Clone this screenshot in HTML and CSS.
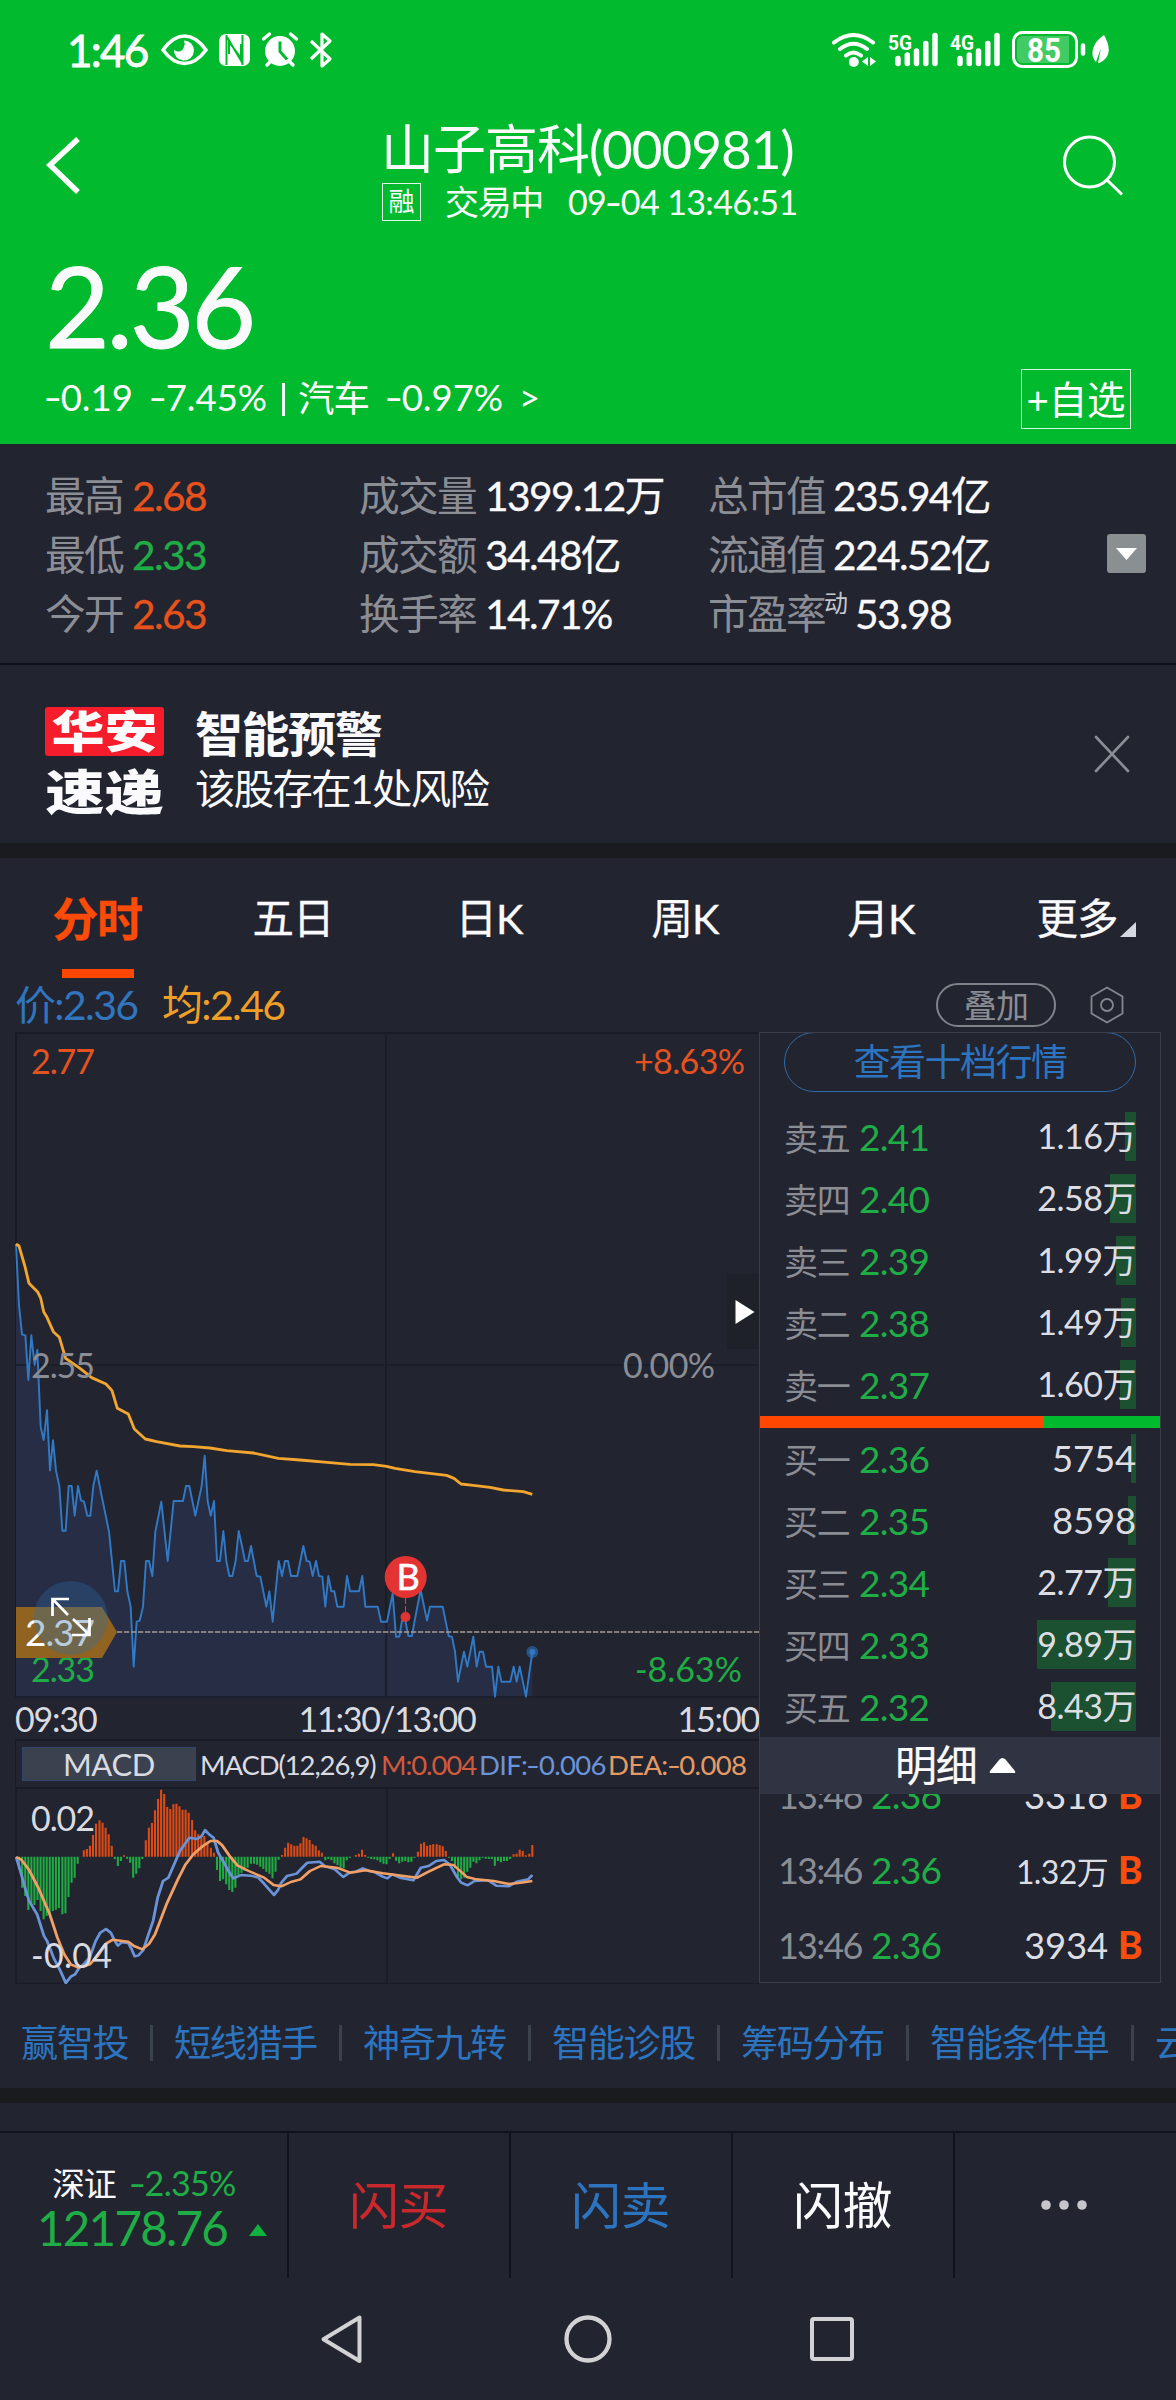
FILE: index.html
```html
<!DOCTYPE html>
<html lang="zh-CN">
<head>
<meta charset="utf-8">
<title>山子高科(000981)</title>
<link rel="stylesheet" href="styles.css">
</head>
<body>
<div class="app">
  <header class="head">
    <div class="status">
      <span class="clock">1:46</span>
      <svg class="ic-left" width="174" height="40" viewBox="160 30 174 40" fill="none" stroke="#fff">
        <path d="M163 50Q173 36 184.500 36T206 50Q196 63.500 184.500 63.500T163 50Z" stroke-width="3.600"/>
        <path d="M184 40.500a10 10 0 1 1-10 9c3.500 4 9.500 1.500 9.800-2.500a7 7 0 0 0 .2-6.500Z" fill="#fff" stroke="none"/>
        <path d="M226 34h17a7 7 0 0 1 7 7v18a7 7 0 0 1-7 7h-17a7 7 0 0 1-7-7V41a7 7 0 0 1 7-7Z" fill="#fff" stroke="none"/>
        <path d="M226.500 35v30M242.500 35v30M227 37l16 27M229 54V42l12 16V44" stroke="#02ba2e" stroke-width="2"/>
        <circle cx="280" cy="51" r="15" fill="#fff" stroke="none"/>
        <path d="M263.500 39l6-5M296.500 39l-6-5M271 61l-4 4M289 61l4 4" stroke-width="3.400" stroke-linecap="round"/>
        <path d="M280 41.500v10l7 8" stroke="#02ba2e" stroke-width="3"/>
        <path d="M311 41l19 18-8 7V34l8 7-19 18" stroke-width="3.200" stroke-linejoin="round"/>
      </svg>
      <svg class="ic-right" width="282" height="44" viewBox="830 28 282 44" fill="none" stroke="#fff">
        <path d="M834 42.500q19.500-15 39 0M840 49q13.500-10.500 27 0M846 55.500q7.500-6 15 0" stroke-width="4" stroke-linecap="round"/>
        <circle cx="853.800" cy="62" r="5" fill="#fff" stroke="none"/>
        <path d="M868 57v9l-6-4.500ZM870 57v9l6-4.500Z" fill="#fff" stroke="none"/>
        <g stroke-width="5.500" stroke-linecap="round">
          <path d="M898 58.500v5M907.300 55v8.500M916.500 51v12.500M925.800 43.500v20M935 35.500v28"/>
          <path d="M960 58.500v5M969.300 55v8.500M978.500 51v12.500M987.800 43.500v20M997 35.500v28"/>
        </g>
        <text class="net" x="888" y="49.500" textLength="24" lengthAdjust="spacingAndGlyphs">5G</text>
        <text class="net" x="950" y="49.500" textLength="24" lengthAdjust="spacingAndGlyphs">4G</text>
        <rect x="1013.500" y="32.500" width="63" height="34" rx="9" stroke-width="3"/>
        <path d="M1023 36h46v27h-46q-6 0-6-6V42q0-6 6-6Z" fill="#fff" fill-opacity=".25" stroke="none"/>
        <text class="bat" x="1027" y="62" textLength="34" lengthAdjust="spacingAndGlyphs">85</text>
        <path d="M1083 45.500v8" stroke-width="4.500" stroke-linecap="round"/>
        <path d="M1104 35q9 16 1 24-4 4-7 4l3-15-5 14q-5-5-3-13t11-14Z" fill="#fff" stroke="none"/>
      </svg>
    </div>
    <div class="titlebar">
      <svg class="back" width="40" height="64" viewBox="44 133 40 64"><path d="M78 139L50 165l28 27" fill="none" stroke="#fff" stroke-width="5.500"/></svg>
      <div class="titles">
        <h1>山子高科(000981)</h1>
        <div class="sub"><span class="rong">融</span><span class="state">交易中</span><span class="stamp">09<b class="hy">-</b>04 13:46:51</span></div>
      </div>
      <svg class="search" width="64" height="64" viewBox="1060 133 64 64" fill="none" stroke="#fff" stroke-width="3"><circle cx="1089.500" cy="162" r="25"/><path d="M1106 179l16 15.500"/></svg>
    </div>
    <div class="price">2.36</div>
    <div class="chg">
      <span class="c1"><b class="hy">-</b>0.19</span><span class="c2"><b class="hy">-</b>7.45%</span><i></i><span class="c3">汽车</span><span class="c4"><b class="hy">-</b>0.97%</span><span class="c5">&gt;</span>
      <button class="add">+自选</button>
    </div>
  </header>

  <section class="stats">
    <dl class="s1">
      <div><dt>最高</dt><dd class="up">2.68</dd></div>
      <div><dt>最低</dt><dd class="dn">2.33</dd></div>
      <div><dt>今开</dt><dd class="up">2.63</dd></div>
    </dl>
    <dl class="s2">
      <div><dt>成交量</dt><dd>1399.12万</dd></div>
      <div><dt>成交额</dt><dd>34.48亿</dd></div>
      <div><dt>换手率</dt><dd>14.71%</dd></div>
    </dl>
    <dl class="s3">
      <div><dt>总市值</dt><dd>235.94亿</dd></div>
      <div><dt>流通值</dt><dd>224.52亿</dd></div>
      <div><dt>市盈率</dt><dd><sup>动</sup>53.98</dd></div>
    </dl>
    <div class="expand"><svg width="21" height="12" viewBox="0 0 21 12"><path d="M0 0h21L10.500 12Z" fill="#fff"/></svg></div>
  </section>

  <section class="alert">
    <div class="logo"><div class="red"><b>华安</b></div><div class="white"><b>速递</b></div></div>
    <div class="msg"><strong>智能预警</strong><span>该股存在1处风险</span></div>
    <svg class="close" width="36" height="38" viewBox="0 0 36 38"><path d="M2 2l32 34M34 2L2 36" stroke="#8a8d94" stroke-width="2.600" stroke-linecap="round"/></svg>
  </section>
  <div class="band"></div>

  <nav class="tabs">
    <a class="on">分时</a><a>五日</a><a>日K</a><a>周K</a><a>月K</a><a class="more">更多<svg width="16" height="15" viewBox="0 0 16 15"><path d="M16 0v15H0Z" fill="#d5d8e0"/></svg></a>
  </nav>
  <div class="legend">
    <span class="lp">价:2.36</span><span class="la">均:2.46</span>
    <span class="overlay">叠加</span>
    <svg class="hex" width="36" height="38" viewBox="0 0 36 38" fill="none" stroke="#84878e" stroke-width="1.800"><path d="M18 1.500l15.500 9v17L18 36.500l-15.500-9v-17Z"/><circle cx="18" cy="19" r="6"/></svg>
  </div>

  <main class="board">
    <div class="charts">
      <svg class="minute" width="745" height="666" viewBox="15 1032 745 666">
        <g stroke="#191c27" stroke-width="2" fill="none">
          <path d="M16 1698V1033H759"/>
        </g>
        <g transform="translate(0 1230) scale(.33333)" fill="none" stroke-linejoin="round">
          <path fill="#262d45" d="M48 42L57 225 66 313 76 316 85 450 94 316 104 405 112 360 122 590 131 630 141 541 150 721 159 631 168 722 178 768 187 902 197 902 206 768 215 768 224 857 234 768 243 811 252 815 262 857 271 857 280 768 290 722 303 788 327 905 345 1084 354 1084 363 993 373 993 382 1084 392 1130 401 1310 410 1175 419 1172 429 1130 438 993 447 993 457 1038 466 905 475 860 484 815 503 993 521 813 549 813 558 768 568 768 586 857 605 768 614 677 623 813 632 857 642 813 651 993 660 993 670 903 679 993 688 1038 697 1038 707 993 716 903 726 948 735 993 744 993 753 948 770 1038 781 1040 799 1130 808 1084 818 1175 836 993 846 1038 855 993 864 993 873 1038 892 1038 901 993 910 948 920 993 929 995 938 1038 948 993 957 1038 967 1040 976 1130 985 1038 994 1084 1003 1084 1012 1130 1031 1130 1041 1038 1050 1084 1077 1084 1087 1038 1096 1130 1133 1130 1143 1175 1161 1175 1178 1090 1188 1220 1198 1220 1206 1172 1216 1172 1225 1218 1236 1218 1244 1172 1262 1080 1281 1172 1290 1130 1328 1130 1346 1218 1356 1221 1365 1265 1374 1355 1392 1265 1402 1310 1420 1220 1430 1310 1439 1265 1449 1265 1458 1310 1476 1310 1485 1400 1495 1310 1504 1355 1531 1355 1541 1310 1550 1355 1559 1310 1578 1400 1597 1265V1403H48Z"/>
          <path stroke="#191c27" stroke-width="5" d="M48 405H2276M1158 -594V1403M48 1401H2276"/>
          <path stroke="#3179c4" stroke-width="5.800" d="M48 42L57 225 66 313 76 316 85 450 94 316 104 405 112 360 122 590 131 630 141 541 150 721 159 631 168 722 178 768 187 902 197 902 206 768 215 768 224 857 234 768 243 811 252 815 262 857 271 857 280 768 290 722 303 788 327 905 345 1084 354 1084 363 993 373 993 382 1084 392 1130 401 1310 410 1175 419 1172 429 1130 438 993 447 993 457 1038 466 905 475 860 484 815 503 993 521 813 549 813 558 768 568 768 586 857 605 768 614 677 623 813 632 857 642 813 651 993 660 993 670 903 679 993 688 1038 697 1038 707 993 716 903 726 948 735 993 744 993 753 948 770 1038 781 1040 799 1130 808 1084 818 1175 836 993 846 1038 855 993 864 993 873 1038 892 1038 901 993 910 948 920 993 929 995 938 1038 948 993 957 1038 967 1040 976 1130 985 1038 994 1084 1003 1084 1012 1130 1031 1130 1041 1038 1050 1084 1077 1084 1087 1038 1096 1130 1133 1130 1143 1175 1161 1175 1178 1090 1188 1220 1198 1220 1206 1172 1216 1172 1225 1218 1236 1218 1244 1172 1262 1080 1281 1172 1290 1130 1328 1130 1346 1218 1356 1221 1365 1265 1374 1355 1392 1265 1402 1310 1420 1220 1430 1310 1439 1265 1449 1265 1458 1310 1476 1310 1485 1400 1495 1310 1504 1355 1531 1355 1541 1310 1550 1355 1559 1310 1578 1400 1597 1265"/>
          <path stroke="#f2a62f" stroke-width="8.500" d="M48 42L57 48 75 110 87 160 113 186 122 204 131 245 141 262 160 305 178 322 197 385 240 415 275 443 318 462 336 482 352 535 385 552 403 597 436 627 470 635 540 648 580 650 630 654 680 662 760 669 835 685 900 690 990 698 1050 703 1120 704 1160 709 1185 715 1245 725 1340 736 1362 745 1383 762 1420 766 1470 772 1510 780 1570 785 1597 793"/>
        </g>
        <circle cx="532.300" cy="1652" r="6" fill="#3179c4" fill-opacity=".55"/>
        <circle cx="532.300" cy="1652" r="3" fill="#3179c4"/>
        <path d="M117 1632H759" stroke="#a59a92" stroke-width="1.500" stroke-dasharray="5.300 1.700"/>
        <g class="lbl">
          <text x="31" y="1074" textLength="64" fill="#e4531f">2.77</text>
          <text x="634" y="1074" textLength="111" fill="#e4531f">+8.63%</text>
          <text x="31" y="1378" textLength="64" fill="#8b8d94">2.55</text>
          <text x="623" y="1378" textLength="92" fill="#8b8d94">0.00%</text>
          <text x="31" y="1682" textLength="64" fill="#1fab45">2.33</text>
          <text x="635" y="1682" textLength="107" fill="#1fab45">-8.63%</text>
        </g>
        <path d="M16 1607h86l15 25-15 26H16Z" fill="#906420"/>
        <text class="tag" x="25" y="1646" textLength="70">2.37</text>
        <circle cx="70.700" cy="1618" r="37" fill="#2b6aa5" fill-opacity=".34"/>
        <path d="M69 1599H52.500V1616M53 1599.500L68 1615M72 1635H89.500V1618M73 1619L89 1634.500" fill="none" stroke="#fff" stroke-width="2.700"/>
        <path d="M405.500 1598v14" stroke="#df3434" stroke-width="1.200" stroke-dasharray="6 2"/>
        <circle cx="405.500" cy="1617" r="5" fill="#df3434"/>
        <circle cx="405.700" cy="1577" r="21" fill="#e43333"/>
        <text class="mk" x="407.500" y="1590" text-anchor="middle">B</text>
        <path d="M727 1274h32v75h-32Z" fill="#1e2129"/>
        <path d="M735.500 1300l19 12-19 12Z" fill="#fff"/>
      </svg>
      <div class="axis"><span>09:30</span><span>11:30/13:00</span><span>15:00</span></div>
      <div class="ind"><span class="btn">MACD</span><span class="p">MACD(12,26,9)</span><span class="m">M:0.004</span><span class="dif">DIF:<b class="hy">-</b>0.006</span><span class="dea">DEA:<b class="hy">-</b>0.008</span></div>
      <svg class="macd" width="745" height="195" viewBox="15 1788 745 195">
        <path d="M16 1788V1982.500H759" fill="none" stroke="#191c27" stroke-width="1.500"/>
        <path d="M387 1788V1983" stroke="#191c27" stroke-width="1.700"/>
        <g transform="translate(0 1700) scale(.3827 .33333)" fill="none">
          <path stroke="#1faa42" stroke-width="5.500" d="M50 467V505M58 467V560M66 467V585M74 467V627M82 467V612M90 467V612M98 467V597M106 467V630M114 467V655M122 467V645M130 467V640M138 467V630M146 467V626M154 467V621M163 467V640M171 467V637M179 467V588M187 467V545M195 467V530M203 467V488M300 467V474M308 467V495M316 467V480M332 467V473M340 467V485M348 467V530M356 467V518M364 467V502M372 467V474M567 467V507M575 467V540M583 467V535M591 467V550M599 467V567M607 467V573M615 467V560M623 467V522M631 467V515M639 467V510M647 467V500M656 467V488M664 467V488M672 467V491M680 467V497M688 467V504M696 467V512M704 467V518M712 467V532M720 467V512M728 467V476M850 467V478M858 467V474M866 467V478M874 467V487M882 467V492M890 467V500M898 467V502M906 467V478M914 467V471M962 467V470M970 467V474M978 467V475M986 467V478M994 467V484M1002 467V488M1010 467V490M1018 467V474M1035 467V479M1043 467V487M1051 467V482M1059 467V480M1067 467V484M1075 467V482M1083 467V470M1173 467V470M1181 467V480M1189 467V502M1197 467V530M1205 467V535M1213 467V530M1221 467V512M1229 467V500M1237 467V482M1245 467V487M1253 467V478M1261 467V470M1269 467V473M1277 467V474M1285 467V474M1293 467V494M1301 467V480M1309 467V484M1317 467V480M1325 467V480M1333 467V474"/>
          <path stroke="#dc4b16" stroke-width="5.500" d="M219 467V448M227 467V444M235 467V434M243 467V402M251 467V368M260 467V358M268 467V365M276 467V380M284 467V400M292 467V434M324 467V463M381 467V418M389 467V380M397 467V366M405 467V328M413 467V294M421 467V266M429 467V279M437 467V318M445 467V324M453 467V310M461 467V308M469 467V316M477 467V326M485 467V326M493 467V335M502 467V357M510 467V388M518 467V400M526 467V402M534 467V405M542 467V425M551 467V440M559 467V455M737 467V462M745 467V440M753 467V425M761 467V430M769 467V434M777 467V434M785 467V427M793 467V408M801 467V412M809 467V417M817 467V430M825 467V434M833 467V448M841 467V455M930 467V462M938 467V458M946 467V446M954 467V462M1027 467V457M1092 467V452M1100 467V428M1108 467V424M1116 467V434M1124 467V432M1132 467V430M1141 467V430M1149 467V432M1157 467V436M1165 467V450M1342 467V460M1350 467V458M1358 467V446M1366 467V450M1374 467V463M1383 467V458M1391 467V432"/>
          <path stroke="#6b93d8" stroke-width="7.500" stroke-linejoin="round" d="M42 468L52 505 64 555 76 600 97 640 115 705 123 720 140 770 158 810 172 846 186 826 196 820 206 802 220 788 235 768 250 720 262 695 277 684 290 696 300 720 308 734 318 724 335 726 344 745 352 766 362 763 374 748 388 700 400 660 412 590 426 540 440 530 455 490 470 450 495 410 515 414 527 405 536 387 546 400 558 410 570 455 585 485 597 510 610 532 630 522 655 524 675 530 690 548 705 568 716 582 726 568 735 545 750 525 775 518 790 500 803 485 835 482 850 496 875 505 897 528 915 514 930 512 948 502 965 510 980 514 1000 527 1012 532 1025 520 1045 530 1080 538 1100 500 1120 495 1140 480 1160 477 1175 490 1195 530 1205 545 1222 553 1240 540 1275 538 1297 554 1330 556 1350 542 1380 535 1391 522"/>
          <path stroke="#f2a066" stroke-width="7.500" stroke-linejoin="round" d="M42 468L55 475 75 505 100 560 130 640 150 710 168 760 185 790 205 800 235 790 255 765 278 727 295 716 335 722 350 735 372 745 390 728 405 700 435 610 465 535 485 490 505 460 530 435 550 420 567 420 580 432 600 465 620 493 650 510 690 530 715 552 735 556 760 543 785 535 810 510 838 495 880 500 915 515 955 508 1000 517 1050 524 1090 530 1120 512 1160 490 1185 492 1220 528 1245 535 1290 540 1330 549 1360 545 1391 540"/>
        </g>
        <g class="lbl" fill="#d9dbe1">
          <text x="31" y="1830" textLength="64">0.02</text>
          <text x="31" y="1967" textLength="81">-0.04</text>
        </g>
      </svg>
    </div>

    <aside class="book">
      <div class="ten">查看十档行情</div>
      <div class="rows sell">
        <div><em>卖五</em><b>2.41</b><span><u style="width:11px"></u>1.16万</span></div>
        <div><em>卖四</em><b>2.40</b><span><u style="width:26px"></u>2.58万</span></div>
        <div><em>卖三</em><b>2.39</b><span><u style="width:20px"></u>1.99万</span></div>
        <div><em>卖二</em><b>2.38</b><span><u style="width:15px"></u>1.49万</span></div>
        <div><em>卖一</em><b>2.37</b><span><u style="width:16px"></u>1.60万</span></div>
      </div>
      <div class="ratio"><i></i></div>
      <div class="rows buy">
        <div><em>买一</em><b>2.36</b><span class="n"><u style="width:5px"></u>5754</span></div>
        <div><em>买二</em><b>2.35</b><span class="n"><u style="width:8px"></u>8598</span></div>
        <div><em>买三</em><b>2.34</b><span><u style="width:28px"></u>2.77万</span></div>
        <div><em>买四</em><b>2.33</b><span><u style="width:99px"></u>9.89万</span></div>
        <div><em>买五</em><b>2.32</b><span><u style="width:85px"></u>8.43万</span></div>
      </div>
      <div class="detail">明细<svg width="27" height="15" viewBox="0 0 27 15"><path d="M13.500 0q1.500 0 3 1.500L26 13q1 2-1 2H2q-2 0-1-2L10.500 1.500q1.500-1.500 3-1.500Z" fill="#fff"/></svg></div>
      <div class="ticks"><div class="inner">
        <div><time>13:46</time><b>2.36</b><span class="n">3316</span><strong>B</strong></div>
        <div><time>13:46</time><b>2.36</b><span>1.32万</span><strong>B</strong></div>
        <div><time>13:46</time><b>2.36</b><span class="n">3934</span><strong>B</strong></div>
      </div></div>
    </aside>
  </main>

  <div class="links"><a class="w3">赢智投</a><a>短线猎手</a><a>神奇九转</a><a>智能诊股</a><a>筹码分布</a><a class="w5">智能条件单</a><a>云</a></div>
  <div class="band"></div>

  <footer class="bar">
    <div class="index">
      <div class="i1"><span>深证</span><span class="pc"><b class="hy">-</b>2.35%</span></div>
      <div class="i2">12178.76<svg width="18" height="12" viewBox="0 0 18 12"><path d="M9 0l9 12H0Z" fill="#0fb23d"/></svg></div>
    </div>
    <a class="buyb">闪买</a><a class="sellb">闪卖</a><a>闪撤</a>
    <a><svg width="46" height="10" viewBox="0 0 46 10" fill="#c6c6ca"><circle cx="5" cy="5" r="4.800"/><circle cx="23" cy="5" r="4.800"/><circle cx="41" cy="5" r="4.800"/></svg></a>
  </footer>
  <div class="sysnav">
    <svg width="44" height="50" viewBox="320 2314 44 50"><path d="M359.500 2317.500v43.500L323.500 2339.200Z" fill="none" stroke="#d2d2d4" stroke-width="4" stroke-linejoin="round"/></svg>
    <svg width="48" height="48" viewBox="0 0 48 48"><circle cx="24" cy="24" r="21.500" fill="none" stroke="#d2d2d4" stroke-width="4.300"/></svg>
    <svg width="44" height="44" viewBox="0 0 44 44"><rect x="2" y="2" width="40" height="40" rx="2" fill="none" stroke="#d2d2d4" stroke-width="4"/></svg>
  </div>
</div>
</body>
</html>
```
FILE: styles.css
```css
* { box-sizing: border-box; letter-spacing: -.04em; }
body { margin: 0; background: #222430; color: #fafafc; font-family: Lato, "Noto Sans CJK SC", sans-serif; }
h1, dl, dd { margin: 0; font-weight: 400; }
em, i { font-style: normal; }
u { text-decoration: none; }
svg { display: block; flex: none; }
.app { width: 1176px; height: 2400px; overflow: hidden; }

/* wide minus sign */
.hy { display: inline-block; width: .43em; font-weight: 400; text-align: center; transform: scaleX(1.4); letter-spacing: 0; }

/* header */
.head { height: 444px; background: #02ba2e; }
.status { display: flex; align-items: center; height: 100px; padding-left: 67px; }
.clock { width: 93px; font-size: 44px; line-height: 60px; -webkit-text-stroke: .8px #fff; }
.ic-right { margin-left: 496px; }
.net { font: 700 21px Roboto, sans-serif; fill: #fff; stroke: none; letter-spacing: 0; }
.bat { font: 700 33px Roboto, sans-serif; fill: #fff; stroke: none; letter-spacing: 0; }
.titlebar { display: flex; height: 133px; padding-left: 44px; }
.back { margin-top: 33px; }
.search { margin: 33px 0 0 2px; }
.titles { flex: none; width: 460px; margin: 17px 218px 0 296px; }
h1 { font-size: 53px; line-height: 63px; white-space: nowrap; padding-left: 1px; letter-spacing: -.019em; }
.sub { display: flex; align-items: center; height: 44px; padding-left: 2px; line-height: 40px; }
.rong { width: 39px; height: 38px; border: 1px solid #e0f8e5; font-size: 26px; line-height: 35px; text-align: center; letter-spacing: 0; }
.state { margin-left: 24px; width: 123px; font-size: 34px; }
.stamp { font-size: 34px; white-space: nowrap; letter-spacing: -.018em; }
.price { height: 132px; padding-left: 45px; font-size: 112px; line-height: 143px; letter-spacing: -.03em; -webkit-text-stroke: .8px #fff; }
.chg { display: flex; align-items: center; height: 68px; padding-left: 45px; font-size: 36.500px; }
.chg span { flex: none; letter-spacing: 0; padding-bottom: 5px; }
.c1 { width: 105px; } .c2 { width: 132px; }
.chg i { width: 3px; height: 33px; background: #f4fff6; margin-right: 13px; }
.chg .c3 { width: 88px; letter-spacing: -.03em; } .c4 { width: 133px; } .c5 { width: 502px; }
.add { width: 110px; height: 60px; padding: 0; border: 1px solid #d9f6df; background: none; color: #fff; font: 38.500px/56px Lato, "Noto Sans CJK SC", sans-serif; letter-spacing: -.005em; }

/* quote figures */
.stats { display: flex; height: 221px; padding: 22px 0 0 45px; border-bottom: 2px solid #0f111b; font-size: 40.700px; line-height: 59px; white-space: nowrap; }
.stats dl > div { display: flex; height: 59px; }
.stats dt { color: #8c8e96; }
.stats dd { -webkit-text-stroke: .3px currentColor; }
.s1 { width: 314px; } .s1 dt { width: 87px; }
.s2 { width: 349px; } .s2 dt { width: 126px; }
.s3 { width: 399px; } .s3 dt { width: 125px; }
sup { display: inline-block; width: 25px; margin-left: -9px; margin-right: 6px; font-size: 24px; line-height: 20px; color: #c6c8ce; vertical-align: 17px; -webkit-text-stroke: 0; }
.up { color: #e8531c; } .dn { color: #1fae46; }
.expand { display: flex; align-items: center; justify-content: center; width: 39px; height: 39px; margin-top: 68px; border-radius: 3px; background: #8a8f92; }

/* alert */
.alert { display: flex; height: 178px; padding-left: 45px; }
.logo { width: 119px; margin-top: 42px; }
.logo div { display: flex; justify-content: center; }
.logo b { font-weight: 900; letter-spacing: 0; white-space: nowrap; }
.red { height: 49px; border-radius: 3px; background: #f61c2b; }
.red b { font-size: 53px; line-height: 48px; transform: scaleY(.84); }
.white { height: 50px; margin-top: 11px; }
.white b { font-size: 59px; line-height: 51px; transform: scaleY(.8); }
.msg { display: flex; flex-direction: column; width: 897px; margin: 39px 0 0 31px; }
.msg strong { font-size: 48px; line-height: 60px; letter-spacing: -.03em; }
.msg span { font-size: 40.400px; line-height: 49px; }
.close { margin: 70px 0 0 2px; }
.band { height: 15px; background: #1a1b1f; }

/* tabs */
.tabs { display: grid; grid-template-columns: repeat(6, 1fr); height: 120px; line-height: 121px; font-size: 41.500px; -webkit-text-stroke: .3px currentColor; }
.tabs a { position: relative; left: -1px; text-align: center; letter-spacing: -.025em; }
.tabs .on { color: #fb4b08; font-weight: 700; font-size: 46px; }
.tabs .on::after { content: ""; position: absolute; left: 63px; top: 111px; width: 72px; height: 9px; background: #ff4702; }
.more svg { position: absolute; left: 141px; top: 64px; }
.legend { display: flex; align-items: center; height: 54px; padding: 0 0 0 15px; font-size: 41px; line-height: 50px; }
.lp { width: 147px; padding-bottom: 1px; color: #3075bd; } .la { width: 774px; padding-bottom: 1px; color: #ee9f28; }
.overlay { width: 120px; height: 44px; border: 2px solid #7f8288; border-radius: 22px; color: #8b8d94; font-size: 33px; line-height: 41px; text-align: center; letter-spacing: -.02em; }
.hex { margin-left: 33px; }

/* charts */
.board { display: flex; height: 951px; padding-left: 15px; }
.charts { width: 744px; }
.lbl, .lbl text { font: 34px Lato, sans-serif; letter-spacing: 0; }
.tag { font: 37px Lato, sans-serif; fill: #fff; letter-spacing: 0; }
.mk { font: 36px Lato, sans-serif; fill: #fff; stroke: #fff; stroke-width: .6px; }
.axis { display: flex; justify-content: space-between; height: 43px; border-bottom: 2px solid #191c27; color: #d9dbe1; font-size: 34px; line-height: 42px; }
.axis span { letter-spacing: -.035em; }
.ind { display: flex; align-items: center; height: 48px; padding-left: 6px; border-left: 1px solid #191c27; border-bottom: 2px solid #191c27; font-size: 27.500px; white-space: nowrap; color: #d9dbe1; }
.btn { width: 174px; height: 34px; margin-right: 4px; border: 1px solid #2f456c; background: #3b414e; font-size: 31px; line-height: 33px; text-align: center; letter-spacing: -.01em; }
.p { width: 181px; } .m { width: 98px; color: #cf5a3e; } .dif { width: 129px; color: #6b93d8; } .dea { color: #e49a66; }
.ind .dif, .ind .dea { letter-spacing: -.025em; }

/* order book */
.book { width: 402px; height: 951px; border: 1px solid #3b3e4a; overflow: hidden; }
.ten { width: 352px; height: 60px; margin: -1px 0 0 24px; border: 1px solid #2f69a8; border-radius: 30px; color: #2c74bf; font-size: 37px; line-height: 58px; text-align: center; }
.rows > div { display: flex; align-items: center; height: 61.800px; padding: 0 24px 0 24px; }
.sell { padding-top: 14px; height: 324px; }
.buy { height: 309px; }
.rows em { width: 75px; color: #8b8d94; font-size: 34px; }
.rows b, .ticks b { color: #1fae46; font-weight: 400; font-size: 37px; letter-spacing: -.02em; }
.rows b { width: 100px; }
.rows span { position: relative; flex: 1; height: 49px; text-align: right; font-size: 34px; line-height: 48px; color: #dcdee4; letter-spacing: -.015em; z-index: 0; }
.rows span.n, .ticks span.n { font-size: 36.500px; letter-spacing: -.005em; }
.rows u { position: absolute; right: 0; top: 0; height: 49px; background: #1b5030; z-index: -1; }
.ratio { height: 12px; background: #02ba2e; }
.ratio i { display: block; width: 284px; height: 12px; background: #ff4702; }
.detail { display: flex; align-items: center; height: 57px; padding: 0 0 1px 135px; background: #303341; font-size: 42px; line-height: 52px; letter-spacing: -.03em; -webkit-text-stroke: .2px #fff; }
.detail svg { margin-left: 13px; }
.ticks { height: 189px; overflow: hidden; }
.inner { margin-top: -37px; }
.inner > div { display: flex; align-items: center; height: 75px; padding-left: 18px; }
.ticks time { width: 93px; color: #8b8d94; font-size: 36px; letter-spacing: -.05em; }
.ticks b { width: 80px; }
.ticks span { width: 157px; text-align: right; color: #dcdee4; font-size: 32px; letter-spacing: -.02em; }
.ticks strong { margin-left: 10px; color: #f84d0d; font-size: 37px; font-weight: 900; }

/* shortcuts */
.links { display: flex; align-items: center; height: 105px; padding: 15px 0 0 21px; overflow: hidden; }
.links a { flex: none; width: 189px; padding-left: 21px; border-right: 3px solid #3b424c; color: #2c74bf; font-size: 37.200px; line-height: 36px; white-space: nowrap; }
.links .w3 { width: 132px; padding-left: 0; }
.links .w5 { width: 225px; }

/* bottom bars */
.bar { display: grid; grid-template-columns: 289px 222px 222px 222px 221px; height: 147px; margin-top: 28px; border-top: 2px solid #10121c; }
.bar > * { display: flex; align-items: center; justify-content: center; border-right: 2px solid #12141d; font-size: 50px; }
.bar > a { padding: 0 1px 7px 0; letter-spacing: -.01em; }
.bar > :last-child { border: 0; padding: 0 4px 2px 0; }
.bar .index { flex-direction: column; align-items: flex-start; justify-content: flex-start; }
.buyb { color: #c9292d; } .sellb { color: #2c74bf; }
.i1 { display: flex; height: 50px; margin-top: 25px; padding-left: 52px; font-size: 33px; line-height: 50px; }
.i1 span:first-child { width: 78px; }
.i1 .pc { font-size: 34px; letter-spacing: -.02em; }
.pc, .i2 { color: #1fae46; }
.i2 { display: flex; align-items: center; height: 44px; padding-left: 37px; margin-top: -2px; font-size: 47.500px; line-height: 44px; letter-spacing: -.037em; }
.i2 svg { margin: 4px 0 0 22px; }
.sysnav { display: flex; align-items: center; height: 122px; padding: 0 0 0 320px; }
.sysnav svg:nth-child(2) { margin-left: 200px; }
.sysnav svg:nth-child(3) { margin-left: 198px; }
```
